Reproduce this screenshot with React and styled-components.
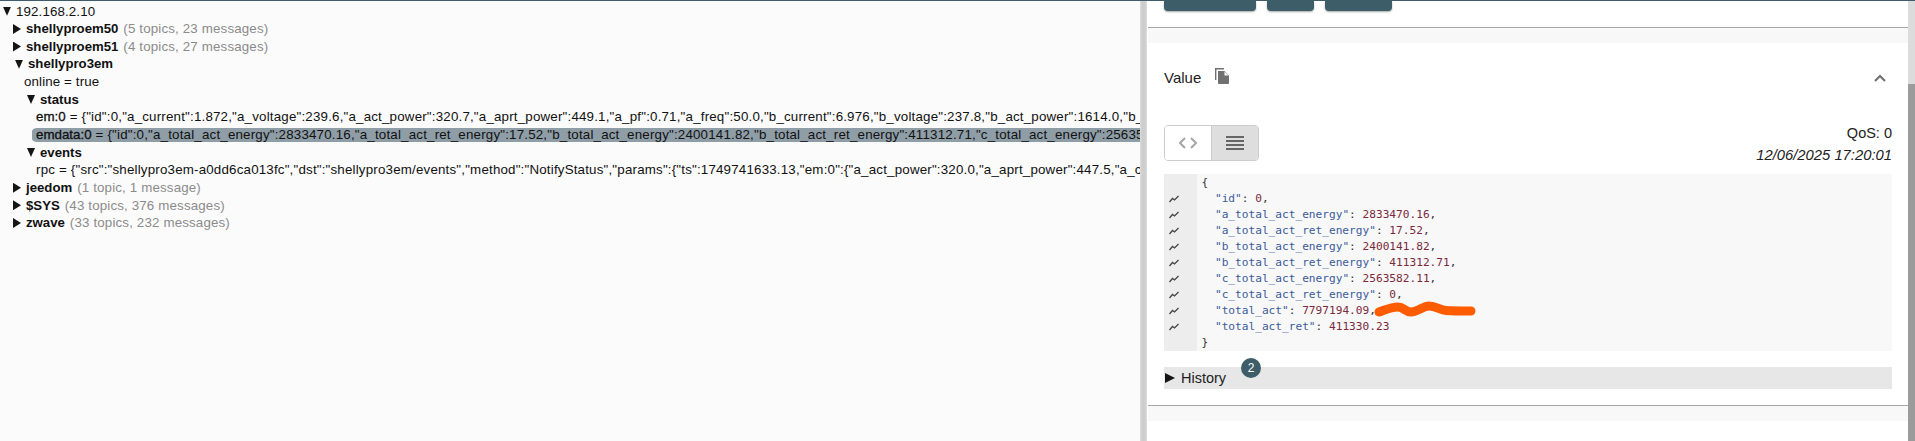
import React from "react";
import styled, { createGlobalStyle } from "styled-components";

const Global = createGlobalStyle`
  html, body { margin: 0; padding: 0; height: 100%; overflow: hidden; background: #fff; }
  #root { height: 100%; }
`;

// ====== PAGE ======
const Page = styled.div`
  width: 1915px;
  height: 441px;
  display: flex;
  overflow: hidden;
  border-top: 1px solid #3d5e69;
  box-sizing: border-box;
`;

// ====== TREE ======
const TreePane = styled.div`
  width: 1140px;
  flex: none;
  overflow: hidden;
  background: #fbfbfb;
  padding: 1.5px 0 0 2px;
  box-sizing: border-box;
  font: 13.33px/17.65px "Liberation Sans", Arial, sans-serif;
  color: #111;
  white-space: nowrap;
`;

const Node = styled.div`
  padding-left: ${({ $indent }) => $indent || 0}px;
`;

const Row = styled.div`
  display: flex;
  align-items: center;
  height: 17.65px;
  box-sizing: border-box;
`;

const SelectedRow = styled(Row)`
  margin-left: -4px;
  padding-left: 4px;
  border-radius: 5px 0 0 5px;
  border-top: 2px solid transparent;
  border-bottom: 2px solid transparent;
  background: #8f9da7;
  background-clip: padding-box;
`;

const Arrow = styled.span`
  flex: none;
  width: 8px;
  height: ${({ $open }) => ($open ? 9 : 10)}px;
  margin: 0 5px 0 ${({ $left }) => $left || 0}px;
  background: #151515;
  clip-path: ${({ $open }) =>
    $open
      ? "polygon(0 0, 100% 0, 50% 100%)"
      : "polygon(0 0, 100% 50%, 0 100%)"};
`;

const Name = styled.b`
  font-weight: 700;
  font-size: 13.2px;
  margin-right: 5px;
`;

const Count = styled.span`
  color: #8b8b8b;
  letter-spacing: 0.15px;
`;

const RootLabel = styled.span`
  letter-spacing: 0.12px;
`;

const TopicKey = styled.span`
  -webkit-text-stroke: 0.3px #111;
  margin-right: 4px;
`;

const TopicValue = styled.span`
  letter-spacing: 0.19px;
`;

// ====== SPLIT ======
const Divider = styled.div`
  width: 8px;
  flex: none;
  background: linear-gradient(90deg, #dedede 0, #cdcdcd 2px, #cdcdcd 5px, #dedede 7px, #fff 7px);
`;

// ====== DETAILS ======
const Details = styled.div`
  flex: 1;
  min-width: 0;
  display: flex;
  flex-direction: column;
  font-family: "Liberation Sans", Arial, sans-serif;
  color: #222;
`;

const Scrollbar = styled.div`
  width: 7px;
  flex: none;
  background: linear-gradient(#dcdcdc 0 83px, #9b9b9b 83px);
`;

const ActionCard = styled.div`
  height: 26px;
  flex: none;
  padding-left: 16px;
  display: flex;
  gap: 11px;
  align-items: flex-start;
  border-bottom: 1px solid #a6a6a6;
  box-sizing: content-box;
`;

const ActionButton = styled.div`
  width: ${({ $w }) => $w}px;
  height: 10px;
  background: #3d5e69;
  border-radius: 0 0 4px 4px;
  box-shadow: 0 1px 2px rgba(0, 0, 0, 0.35);
`;

const Gap = styled.div`
  height: 15px;
  flex: none;
  background: #f8f8f8;
`;

const ValueCard = styled.div`
  height: 363px;
  flex: none;
  padding: 0 16px;
  box-sizing: border-box;
  border-bottom: 1px solid #a6a6a6;
  position: relative;
`;

const ValueHeader = styled.div`
  display: flex;
  align-items: center;
  height: 69px;
  font-size: 15px;
`;

const CopyIcon = styled.svg`
  width: 16px;
  height: 18px;
  margin: -4px 0 0 13px;
`;

const Chevron = styled.svg`
  width: 12px;
  height: 8px;
  margin-left: auto;
  margin-right: 6px;
`;

const Toolbar = styled.div`
  display: flex;
  justify-content: space-between;
  align-items: flex-start;
  margin-top: 13px;
  height: 49px;
`;

const ToggleGroup = styled.div`
  display: flex;
  width: 95px;
  height: 36px;
  box-sizing: border-box;
  border: 1px solid #ccc;
  border-radius: 4px;
  overflow: hidden;
`;

const Toggle = styled.div`
  flex: 1;
  display: flex;
  align-items: center;
  justify-content: center;
  background: ${({ $active }) => ($active ? "#dedede" : "#fff")};
  & + & {
    border-left: 1px solid #ccc;
  }
`;

const Meta = styled.div`
  text-align: right;
  font-size: 14.5px;
  line-height: 22px;
  margin-top: -3px;
`;

const Stamp = styled.div`
  font-style: italic;
  font-size: 14.8px;
`;

const Code = styled.div`
  display: flex;
  height: 177px;
  background: #f8f8f8;
  font: 11.15px/16px "DejaVu Sans Mono", monospace;
  white-space: pre;
`;

const Gutter = styled.div`
  width: 33px;
  flex: none;
  background: #ededed;
  padding-top: 1px;
`;

const GutterLine = styled.div`
  height: 16px;
  padding-left: 5px;
  display: flex;
  align-items: center;
`;

const Lines = styled.div`
  flex: 1;
  padding: 1px 0 0 4.5px;
  position: relative;
`;

const Key = styled.span`
  color: #3b5b9a;
`;

const Num = styled.span`
  color: #7a2a3c;
`;

const Plain = styled.span`
  color: #333;
`;

const Scribble = styled.svg`
  position: absolute;
  left: 177px;
  top: 127px;
  width: 102px;
  height: 17px;
`;

const History = styled.div`
  position: relative;
  margin-top: 16px;
  height: 22px;
  background: #e7e7e7;
  display: flex;
  align-items: center;
  font-size: 14.5px;
  padding-left: 1px;
`;

const HistoryArrow = styled.span`
  width: 10px;
  height: 10px;
  margin-right: 6px;
  background: #151515;
  clip-path: polygon(0 0, 100% 50%, 0 100%);
`;

const Badge = styled.span`
  position: absolute;
  left: 77px;
  top: -9px;
  width: 20px;
  height: 20px;
  border-radius: 50%;
  background: #3d5e69;
  color: #fff;
  font-size: 12px;
  display: flex;
  align-items: center;
  justify-content: center;
`;

const Tail = styled.div`
  flex: 1;
  background: linear-gradient(#f8f8f8 0 15px, #fff 15px);
`;

const Spark = () => (
  <svg width="10" height="8" viewBox="0 0 10 8" fill="none" stroke="#444" strokeWidth="1.3">
    <path d="M0.5 7 L3.5 3.5 L5.5 5 L9.5 1" />
  </svg>
);

const tree = {
  em: '{"id":0,"a_current":1.872,"a_voltage":239.6,"a_act_power":320.7,"a_aprt_power":449.1,"a_pf":0.71,"a_freq":50.0,"b_current":6.976,"b_voltage":237.8,"b_act_power":1614.0,"b_aprt_power":1620.3}',
  emdata: '{"id":0,"a_total_act_energy":2833470.16,"a_total_act_ret_energy":17.52,"b_total_act_energy":2400141.82,"b_total_act_ret_energy":411312.71,"c_total_act_energy":2563582.11}',
  rpc: '{"src":"shellypro3em-a0dd6ca013fc","dst":"shellypro3em/events","method":"NotifyStatus","params":{"ts":1749741633.13,"em:0":{"a_act_power":320.0,"a_aprt_power":447.5,"a_current":1.868}}}',
};

const values = [
  ["id", "0", ","],
  ["a_total_act_energy", "2833470.16", ","],
  ["a_total_act_ret_energy", "17.52", ","],
  ["b_total_act_energy", "2400141.82", ","],
  ["b_total_act_ret_energy", "411312.71", ","],
  ["c_total_act_energy", "2563582.11", ","],
  ["c_total_act_ret_energy", "0", ","],
  ["total_act", "7797194.09", ","],
  ["total_act_ret", "411330.23", ""],
];

const Closed = ({ name, count }) => (
  <Row>
    <Arrow />
    <Name>{name}</Name>
    <Count>({count})</Count>
  </Row>
);

export default function App() {
  return (
    <Page>
      <Global />
      <TreePane>
        <Row>
          <Arrow $open $left={1} />
          <RootLabel>192.168.2.10</RootLabel>
        </Row>
        <Node $indent={11}>
          <Closed name="shellyproem50" count="5 topics, 23 messages" />
          <Closed name="shellyproem51" count="4 topics, 27 messages" />
          <Row>
            <Arrow $open $left={2} />
            <Name>shellypro3em</Name>
          </Row>
          <Node $indent={11}>
            <Row><RootLabel>online = true</RootLabel></Row>
            <Row>
              <Arrow $open $left={3} />
              <Name>status</Name>
            </Row>
            <Node $indent={12}>
              <Row><TopicKey>em:0</TopicKey><TopicValue>= {tree.em}</TopicValue></Row>
              <SelectedRow><TopicKey>emdata:0</TopicKey><TopicValue>= {tree.emdata}</TopicValue></SelectedRow>
            </Node>
            <Row>
              <Arrow $open $left={3} />
              <Name>events</Name>
            </Row>
            <Node $indent={12}>
              <Row><TopicValue>rpc = {tree.rpc}</TopicValue></Row>
            </Node>
          </Node>
          <Closed name="jeedom" count="1 topic, 1 message" />
          <Closed name="$SYS" count="43 topics, 376 messages" />
          <Closed name="zwave" count="33 topics, 232 messages" />
        </Node>
      </TreePane>
      <Divider />
      <Details>
        <ActionCard>
          <ActionButton $w={92} />
          <ActionButton $w={47} />
          <ActionButton $w={67} />
        </ActionCard>
        <Gap />
        <ValueCard>
          <ValueHeader>
            Value
            <CopyIcon viewBox="0 0 16 18" fill="#707070">
              <path d="M1 1h9v1.4H2.4V13H1z" />
              <path d="M4 4h6.5L15 8.5V16a1 1 0 0 1-1 1H5a1 1 0 0 1-1-1z" />
              <path d="M10.5 4.6V8.6h4" fill="#fff" />
            </CopyIcon>
            <Chevron viewBox="0 0 12 8" fill="none" stroke="#707070" strokeWidth="2">
              <path d="M1 7 L6 2 L11 7" />
            </Chevron>
          </ValueHeader>
          <Toolbar>
            <ToggleGroup>
              <Toggle>
                <svg width="20" height="12" viewBox="0 0 20 12" fill="none" stroke="#a5a5a5" strokeWidth="2">
                  <path d="M7 1 L2 6 L7 11 M13 1 L18 6 L13 11" />
                </svg>
              </Toggle>
              <Toggle $active>
                <svg width="18" height="14" viewBox="0 0 18 14" fill="#666">
                  <path d="M0 0h18v2H0zM0 4h18v2H0zM0 8h18v2H0zM0 12h18v2H0z" />
                </svg>
              </Toggle>
            </ToggleGroup>
            <Meta>
              <div>QoS: 0</div>
              <Stamp>12/06/2025 17:20:01</Stamp>
            </Meta>
          </Toolbar>
          <Code>
            <Gutter>
              <GutterLine />
              {values.map(([k]) => (
                <GutterLine key={k}>
                  <Spark />
                </GutterLine>
              ))}
            </Gutter>
            <Lines>
              <Plain>{"{"}</Plain>
              {values.map(([k, v, c]) => (
                <div key={k}>
                  {"  "}
                  <Key>"{k}"</Key>
                  <Plain>: </Plain>
                  <Num>{v}</Num>
                  <Plain>{c}</Plain>
                </div>
              ))}
              <Plain>{"}"}</Plain>
              <Scribble viewBox="0 0 102 17">
                <path d="M5 11 C11 9 17 6 24 6 C30 6 31 11 37 11 C44 11 49 5 55 5 C62 5 66 9 72 9.5 C80 10 88 10 97 10" fill="none" stroke="#ff5c00" strokeWidth="9" strokeLinecap="round" />
              </Scribble>
            </Lines>
          </Code>
          <History>
            <HistoryArrow />
            History
            <Badge>2</Badge>
          </History>
        </ValueCard>
        <Tail />
      </Details>
      <Scrollbar />
    </Page>
  );
}
